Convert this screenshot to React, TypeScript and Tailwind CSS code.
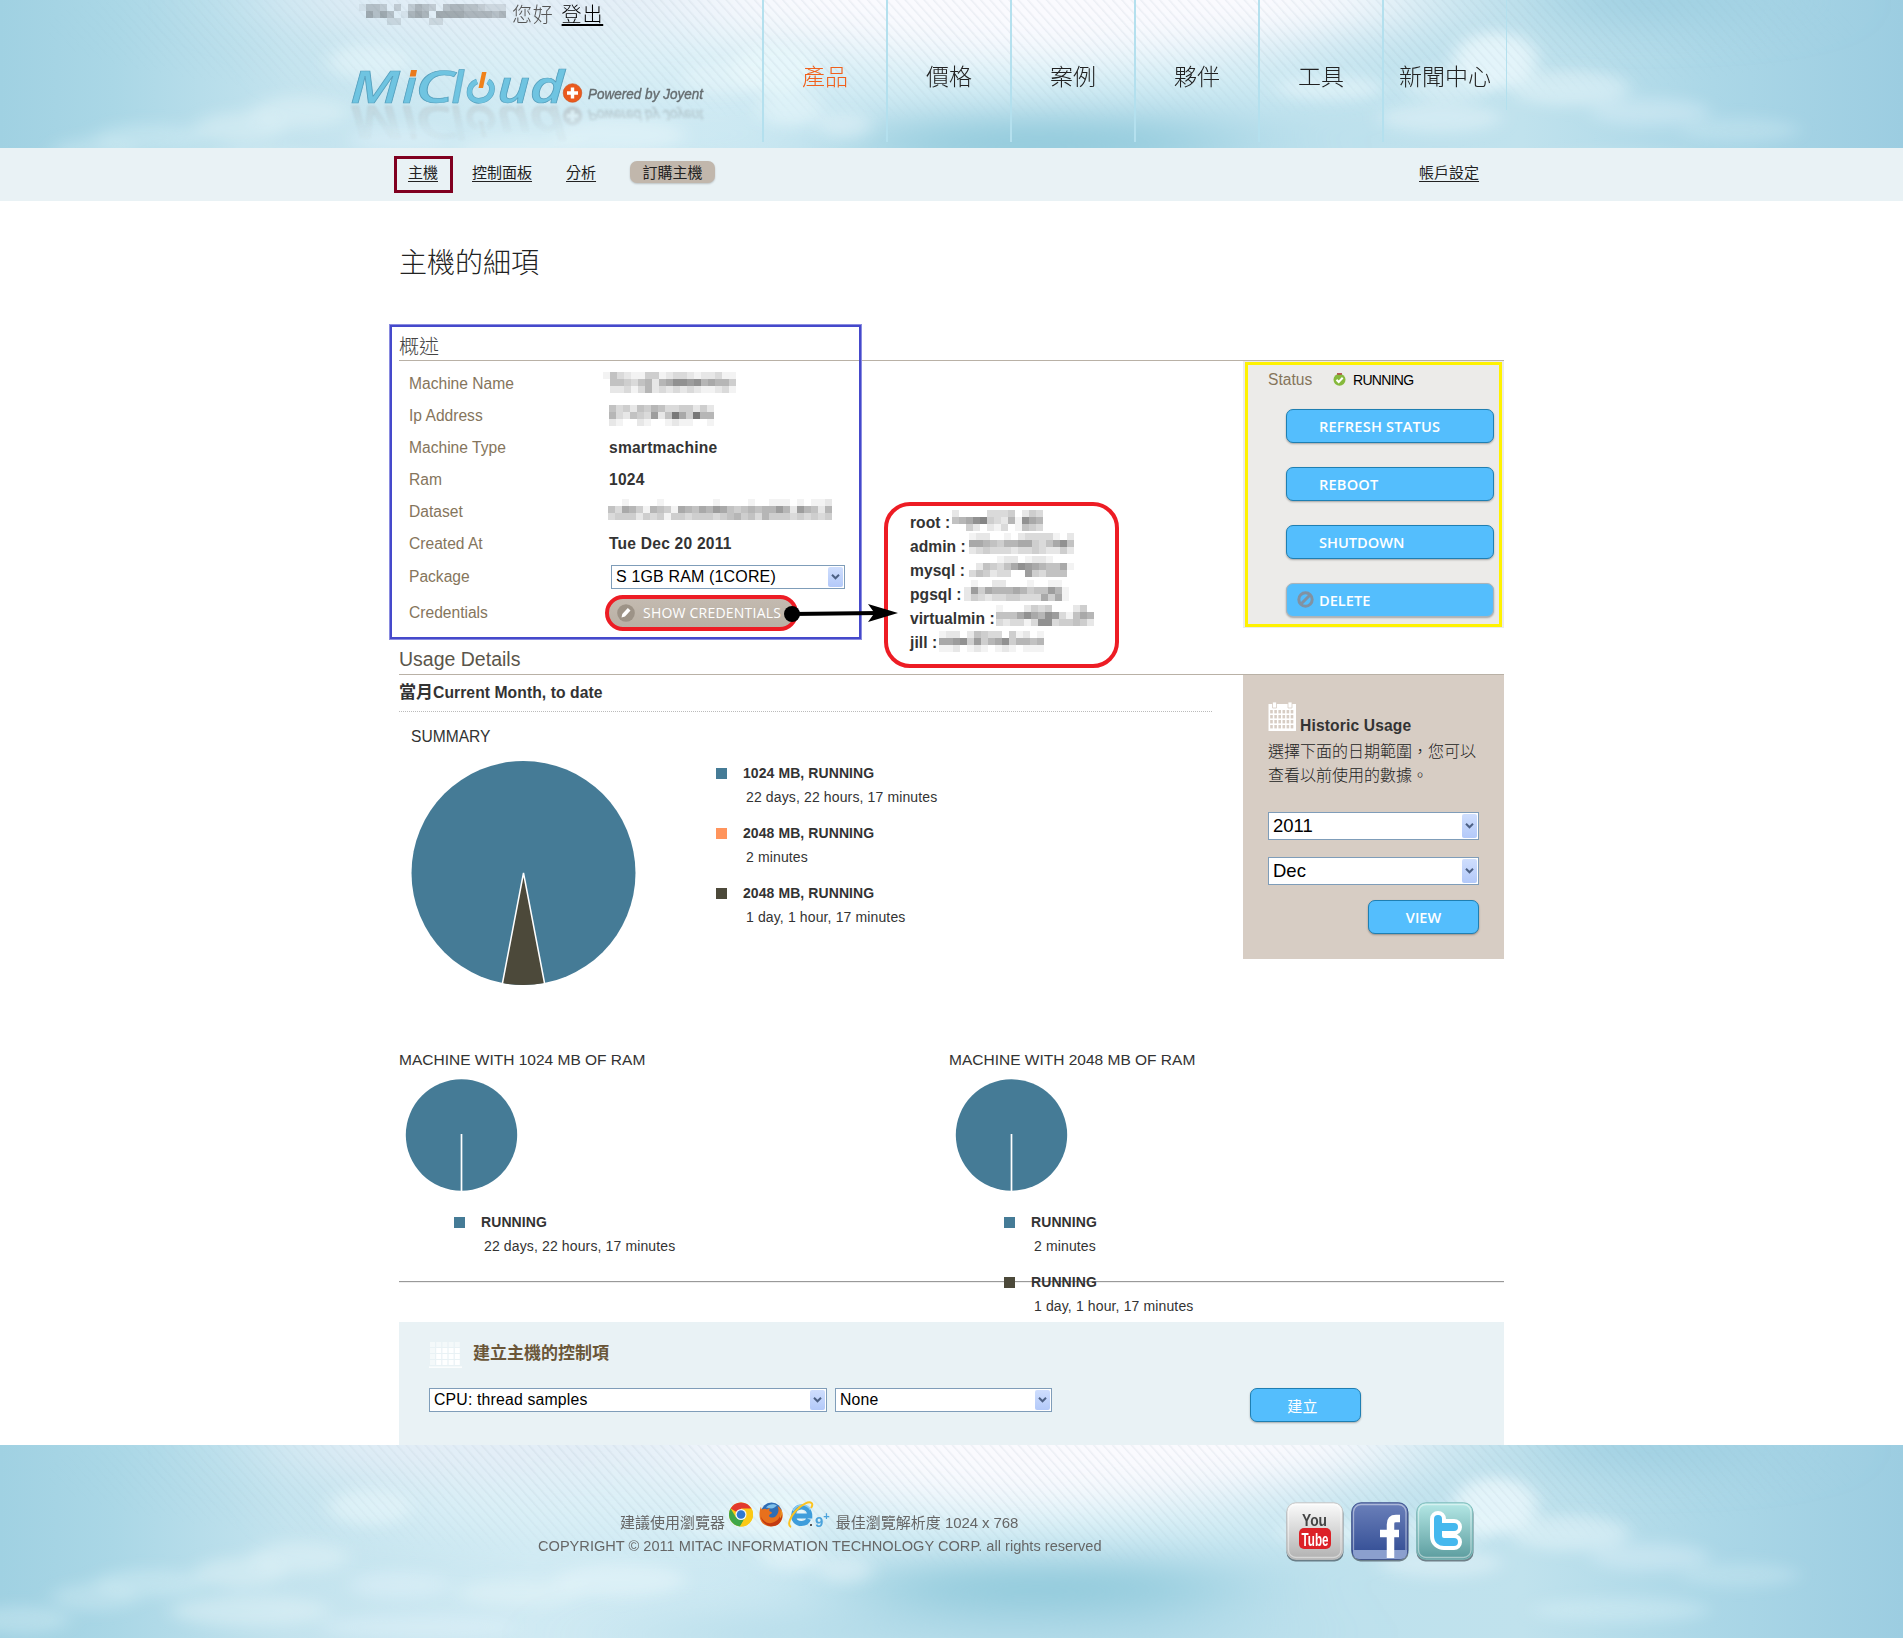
import React from "react";

const SANS = "font-['Liberation_Sans','Noto_Sans_CJK_TC',sans-serif]";

/* Pixelated block that hides private text: every digit is a 7px cell, "." is clear. */
function Mosaic({ rows, className = "" }: { rows: string[]; className?: string }) {
  return (
    <div className={`shrink-0 ${className}`}>
      {rows.map((r, i) => (
        <div key={i} className="flex h-[7px]">
          {r.split("").map((c, j) => (
            <span
              key={j}
              className="h-[7px] w-[7px] bg-black"
              style={{ opacity: c === "." ? 0 : parseInt(c, 16) * 0.048 }}
            />
          ))}
        </div>
      ))}
    </div>
  );
}

function Sky({ id }: { id: string }) {
  return (
    <svg className="absolute inset-0 h-full w-full" viewBox="0 0 1903 193" preserveAspectRatio="xMidYMin slice">
      <defs>
        <linearGradient id={`${id}b`} x1="0" x2="1" y1="0" y2="0">
          <stop offset="0" stopColor="#a0d1e2" />
          <stop offset=".06" stopColor="#aad7e6" />
          <stop offset=".15" stopColor="#c3e3ee" />
          <stop offset=".28" stopColor="#d0eaf3" />
          <stop offset=".42" stopColor="#cbe8f2" />
          <stop offset=".6" stopColor="#bbe0ed" />
          <stop offset=".8" stopColor="#c0e2ed" />
          <stop offset=".9" stopColor="#abd7e7" />
          <stop offset="1" stopColor="#9ccde1" />
        </linearGradient>
        <radialGradient id={`${id}m`} cx=".5" cy=".15" r=".48">
          <stop offset="0" stopColor="#fff" />
          <stop offset=".55" stopColor="#fff" stopOpacity=".8" />
          <stop offset="1" stopColor="#fff" stopOpacity="0" />
        </radialGradient>
        <mask id={`${id}k`}>
          <rect width="1903" height="193" fill={`url(#${id}m)`} />
        </mask>
        <pattern id={`${id}p`} width="7" height="7" patternUnits="userSpaceOnUse" patternTransform="rotate(-42)">
          <rect width="1.500" height="7" fill="#7d9aa8" opacity=".12" />
        </pattern>
        <filter id={`${id}f`} filterUnits="userSpaceOnUse" x="-200" y="-200" width="2303" height="600">
          <feGaussianBlur stdDeviation="60 20" />
        </filter>
        <filter id={`${id}g`} filterUnits="userSpaceOnUse" x="-100" y="-100" width="2103" height="400">
          <feGaussianBlur stdDeviation="9 7" />
        </filter>
      </defs>
      <rect width="1903" height="193" fill={`url(#${id}b)`} />
      <g filter={`url(#${id}f)`}>
        <ellipse cx="1030" cy="0" rx="400" ry="58" fill="#fafafe" />
        <ellipse cx="500" cy="0" rx="220" ry="36" fill="#e4eef7" />
        <ellipse cx="1050" cy="76" rx="330" ry="18" fill="#dcf2f8" />
        <ellipse cx="1040" cy="142" rx="200" ry="24" fill="#8cc7d9" />
        <ellipse cx="640" cy="60" rx="280" ry="28" fill="#dbf0f7" />
        <ellipse cx="1650" cy="0" rx="110" ry="22" fill="#9bcde0" />
        <ellipse cx="950" cy="190" rx="330" ry="12" fill="#a4d3e3" />
      </g>
      <g filter={`url(#${id}g)`} fill="#e9f7fb">
        <ellipse cx="775" cy="68" rx="44" ry="24" opacity=".8" />
        <ellipse cx="725" cy="78" rx="44" ry="16" opacity=".5" />
        <ellipse cx="790" cy="108" rx="32" ry="18" opacity=".55" />
        <ellipse cx="845" cy="125" rx="28" ry="14" opacity=".45" />
        <ellipse cx="370" cy="62" rx="42" ry="18" opacity=".55" />
        <ellipse cx="620" cy="135" rx="66" ry="17" opacity=".5" />
        <ellipse cx="520" cy="148" rx="64" ry="14" opacity=".4" />
        <ellipse cx="400" cy="140" rx="50" ry="14" opacity=".35" />
        <ellipse cx="300" cy="112" rx="50" ry="16" opacity=".4" />
        <ellipse cx="240" cy="128" rx="46" ry="16" opacity=".4" />
        <ellipse cx="150" cy="138" rx="56" ry="14" opacity=".3" />
        <ellipse cx="95" cy="152" rx="44" ry="14" opacity=".28" />
        <ellipse cx="20" cy="175" rx="50" ry="14" opacity=".3" />
        <ellipse cx="250" cy="166" rx="80" ry="16" opacity=".4" />
        <ellipse cx="420" cy="182" rx="100" ry="12" opacity=".35" />
        <ellipse cx="1495" cy="60" rx="42" ry="28" opacity=".85" />
        <ellipse cx="1450" cy="84" rx="50" ry="16" opacity=".5" />
        <ellipse cx="1330" cy="88" rx="54" ry="12" opacity=".6" />
        <ellipse cx="1440" cy="118" rx="62" ry="15" opacity=".45" />
        <ellipse cx="1570" cy="88" rx="60" ry="18" opacity=".5" />
        <ellipse cx="1650" cy="112" rx="60" ry="14" opacity=".35" />
        <ellipse cx="1740" cy="130" rx="60" ry="12" opacity=".25" />
        <ellipse cx="1620" cy="165" rx="90" ry="12" opacity=".3" />
      </g>
      <rect width="1903" height="193" fill={`url(#${id}p)`} mask={`url(#${id}k)`} />
    </svg>
  );
}

function Logo() {
  return (
    <svg className="overflow-visible" width="360" height="66" viewBox="350 64 360 66">
      <defs>
        <linearGradient id="fade" gradientUnits="userSpaceOnUse" x1="0" x2="0" y1="104" y2="80">
          <stop offset="0" stopColor="#fff" stopOpacity=".45" />
          <stop offset="1" stopColor="#fff" stopOpacity=".1" />
        </linearGradient>
        <mask id="fadeMask" maskUnits="userSpaceOnUse" x="340" y="60" width="380" height="50">
          <rect x="340" y="60" width="380" height="50" fill="url(#fade)" />
        </mask>
        <filter id="gray" x="-5%" y="-10%" width="110%" height="130%">
          <feColorMatrix type="saturate" values="0.1" />
          <feGaussianBlur stdDeviation=".9" />
        </filter>
        <g id="wordmark">
          <g
            className="font-['Open_Sans','Noto_Sans',sans-serif] font-semibold italic"
            fontSize="46"
            fill="#6fc4e1"
            stroke="#559fbd"
            strokeWidth=".7"
          >
            <text x="350" y="103" textLength="50" lengthAdjust="spacingAndGlyphs">M</text>
            <text x="402" y="103" textLength="15" lengthAdjust="spacingAndGlyphs">ı</text>
            <text x="415" y="103" textLength="39" lengthAdjust="spacingAndGlyphs">C</text>
            <path d="M452.500 103L459 69.500h5.500L458 103z" />
            <text x="497" y="103" textLength="33" lengthAdjust="spacingAndGlyphs">u</text>
            <text x="529.500" y="103" textLength="35" lengthAdjust="spacingAndGlyphs">d</text>
          </g>
          <path d="M477 81.300c-5 2-7.500 6-7.500 11 0 5 4 8.500 9 8.500 8 0 13.500-5.500 13.500-12 0-3.500-1.500-6-4-7.500" fill="none" stroke="#559fbd" strokeWidth="5.700" />
          <path d="M477 81.300c-5 2-7.500 6-7.500 11 0 5 4 8.500 9 8.500 8 0 13.500-5.500 13.500-12 0-3.500-1.500-6-4-7.500" fill="none" stroke="#6fc4e1" strokeWidth="4.600" />
          <path d="M482 72h4.500l-3.500 16h-4.500z" fill="#f0811a" />
          <path d="M411 70h6l-1.300 6.500h-6z" fill="#ea7a1c" />
          <circle cx="572.500" cy="93" r="9.300" fill="#ea5a1e" stroke="#c94f1d" strokeWidth=".6" />
          <path d="M572.500 87.500v11M567 93h11" stroke="#fff" strokeWidth="3.400" />
          <text
            x="588"
            y="99"
            fontSize="14.500"
            textLength="115"
            lengthAdjust="spacingAndGlyphs"
            fill="#666d70"
            stroke="#666d70"
            strokeWidth=".4"
            className="font-['Liberation_Sans',sans-serif] italic"
          >
            Powered by Joyent
          </text>
        </g>
      </defs>
      <use href="#wordmark" />
      <g transform="translate(0 209) scale(1 -1)" opacity=".75">
        <g mask="url(#fadeMask)">
          <use href="#wordmark" filter="url(#gray)" />
        </g>
      </g>
    </svg>
  );
}

function Select({ value, className = "" }: { value: string; className?: string }) {
  return (
    <div className={`flex items-stretch justify-between border border-[#7f9db9] bg-white p-px pl-[4px] text-black ${className}`}>
      <span className="self-center whitespace-nowrap">{value}</span>
      <span className="flex w-[15px] items-center justify-center rounded-[2px] bg-linear-to-b from-[#cfdefd] to-[#b3c9f9]">
        <svg width="9" height="6" viewBox="0 0 9 6">
          <path d="M1 .8l3.500 3.500L8 .8" fill="none" stroke="#4d6185" strokeWidth="2" />
        </svg>
      </span>
    </div>
  );
}

function Button({ children, className = "", border = "border-[#1f7fb2]" }: { children: React.ReactNode; className?: string; border?: string }) {
  return (
    <button
      className={`flex h-[34px] items-center rounded-[7px] border ${border} bg-[#54befd] pt-[2px] font-['Open_Sans','Noto_Sans_CJK_TC',sans-serif] text-white shadow-[0_1px_2px_rgba(0,0,0,0.3)] ${className}`}
    >
      {children}
    </button>
  );
}

function Calendar({ faint = false }: { faint?: boolean }) {
  const cells = [];
  for (let r = 0; r < 4; r++)
    for (let c = 0; c < 6; c++)
      cells.push(<rect key={`${r}-${c}`} x={2.2 + c * 4.1} y={8 + r * 5} width="2.600" height="3.400" />);
  if (faint) {
    const blocks = [];
    for (let r = 0; r < 4; r++)
      for (let c = 0; c < 5; c++)
        blocks.push(<rect key={`${r}-${c}`} x={1 + c * 6.2} y={r * 6} width="5" height="5" opacity={c < 1 || r < 1 ? 0.5 : 0.95} />);
    return (
      <svg width="33" height="26" viewBox="0 0 33 26" fill="#fff">
        {blocks}
        <rect y="24.500" width="33" height="1.300" />
      </svg>
    );
  }
  return (
    <svg width="29" height="29" viewBox="0 0 29 29">
      <path d="M.5 2H28v27H.5z" fill="#fff" />
      <path d="M4.500 0h4v6h-4zM20 0h4v6h-4z" fill="#fff" stroke="#d7cdc4" strokeWidth=".8" />
      <g fill="#d7cdc4">{cells}</g>
    </svg>
  );
}

const swatches = { blue: "bg-[#457b96]", orange: "bg-[#ff945c]", dark: "bg-[#4c493a]" };
type Entry = { color: keyof typeof swatches; label: string; time: string };

function Legend({ items }: { items: Entry[] }) {
  return (
    <ul className="relative z-10 flex flex-col gap-3 text-[14px] leading-6 whitespace-nowrap text-[#333]">
      {items.map((it, i) => (
        <li key={i}>
          <div className="flex h-6 items-center gap-4 font-bold tracking-[0.080px]">
            <span className={`h-[11px] w-[11px] ${swatches[it.color]}`} />
            <span>{it.label}</span>
          </div>
          <div className="ml-[30px] tracking-[0.130px]">{it.time}</div>
        </li>
      ))}
    </ul>
  );
}

function SmallPie() {
  return (
    <svg className="mt-[9px] ml-[6px]" width="113" height="112" viewBox="0 0 113 112">
      <circle cx="56.500" cy="56" r="55.700" fill="#457b96" />
      <path d="M56.500 55v57" stroke="#fff" strokeWidth="1.700" />
    </svg>
  );
}

function ChromeIcon() {
  return (
    <svg width="24" height="25" viewBox="0 0 24 24">
      <circle cx="12" cy="12" r="12" fill="#fbc916" />
      <path d="M12 12L1.600 6A12 12 0 0 1 22.400 6z" fill="#e2382c" />
      <path d="M1.600 6A12 12 0 0 0 11 24l5.500-9.500L12 12 6.800 14.500z" fill="#3fa648" />
      <path d="M22.400 6H12v6l4.500 2.500L11 24A12 12 0 0 0 22.400 6z" fill="#fbc916" />
      <circle cx="12" cy="12" r="5.500" fill="#f4f8fb" />
      <circle cx="12" cy="12" r="4.300" fill="#2f78cf" />
    </svg>
  );
}

function FirefoxIcon() {
  return (
    <svg width="24" height="25" viewBox="0 0 24 24">
      <circle cx="12.500" cy="10.500" r="10.500" fill="#2f6db5" />
      <path d="M7 5c3-4 8-4 11-2-2 1-3 3-6 3z" fill="#7fc0ea" />
      <path d="M2 4c0 2 1 3 1 3 2-1 4-1 5 0 1-1 2-1.500 3-1.500-1 2-1 2.500 0 3.500 1 .5 2 .5 2 1.500-1 1-3 1.500-3 3 1 2 5 2 7 0 3-3 3-7 1.500-10C23 6 24.500 11 23.500 15c-1.500 6-6 9-11.500 9C5 24 .5 19 .5 12.500.5 9 1 6 2 4z" fill="#e8701c" />
      <path d="M2 14c2 5 7 8 12 6 5-1.500 8-6 8-11 2 5 1 9-2 12-3 3-9 4-13 1-3-2-5-5-5-8z" fill="#c23a12" />
      <path d="M22 7c1 3 1 7-1 9 .5-3 1-6 1-9z" fill="#fcc32c" />
    </svg>
  );
}

function IeIcon() {
  return (
    <svg width="26" height="27" viewBox="0 0 26 27">
      <path d="M20.500 18c-1 3-3.500 4.500-7 4.500-5 0-8-3.500-8-8s3-8.500 8-8.500 8.300 3.500 8.300 9H8" fill="none" stroke="#3f9ddb" strokeWidth="5" />
      <path d="M5 10c2-4 5-6 9-6 4 0 7 2 8.500 5" fill="none" stroke="#8accf2" strokeWidth="1.500" />
      <path d="M3 26C-1 24 2 16 8 9.500 14 3 21 0 23.500 2c1.200 1 .8 3-.5 5" fill="none" stroke="#fcc321" strokeWidth="2" />
      <path d="M22 23h2v2h-2z" fill="#555" />
    </svg>
  );
}

function Tile({ id, from, to, edge, children }: { id: string; from: string; to: string; edge: string; children: React.ReactNode }) {
  return (
    <svg width="58" height="61" viewBox="0 0 58 61">
      <defs>
        <linearGradient id={id} x1="0" x2="0" y1="0" y2="1">
          <stop offset="0" stopColor={from} />
          <stop offset="1" stopColor={to} />
        </linearGradient>
      </defs>
      <rect x=".5" y="3" width="57" height="56.500" rx="9" fill="#4d5c66" opacity=".75" />
      <rect x=".8" y=".8" width="56" height="56.500" rx="9" fill={`url(#${id})`} stroke={edge} strokeWidth="1" />
      <rect x="2.500" y="2.500" width="52.500" height="53" rx="7.500" fill="none" stroke="#fff" strokeOpacity=".45" strokeWidth="1.300" />
      {children}
    </svg>
  );
}

const navItems = ["產品", "價格", "案例", "夥伴", "工具", "新聞中心"];

function Row({ label, children, className = "h-8" }: { label: string; children: React.ReactNode; className?: string }) {
  return (
    <div className={`flex items-center pl-[10px] ${className}`}>
      <dt className="w-[200px] text-[15.600px] text-[#85755c]">{label}</dt>
      <dd className="text-[15.600px] font-bold tracking-[0.220px] text-[#333]">{children}</dd>
    </div>
  );
}

const credentials: { name: string; gap: string; rows: string[] }[] = [
  { name: "root :", gap: "left-[62px] top-[-1px]", rows: ["2....3334.243", "5679a43261976", "..42.213.1543"] },
  { name: "admin :", gap: "left-[79px] top-[-2px]", rows: ["122..1.233331.2", "776546677435795", "234333233432242"] },
  { name: "mysql :", gap: "left-[79px] top-[-3px]", rows: ["....122.1221...", ".25435798765571", "354233..843555."] },
  { name: "pgsql :", gap: "left-[74px] top-[-3px]", rows: [".1..22...1..11.", "284766676455861", "243233443337471"] },
  { name: "virtualmin :", gap: "left-[106px] top-[-2px]", rows: ["1...2434...24.", "55579769831576", "32331399344542"] },
  { name: "jill :", gap: "left-[49px] top-0", rows: ["122.25433.412.1", "778948467946656", "112.121.121.111"] },
];

export default function App() {
  return (
    <div className={`relative h-[1638px] w-[1903px] overflow-hidden bg-white text-[#333] ${SANS}`}>
      <header className="relative h-[148px] overflow-hidden">
        <Sky id="top" />
        <div className="relative flex pl-[352px]">
          <div className="w-[410px]">
            <div className="flex h-[29px] items-center pl-[7px] text-[20px] leading-7 tracking-[0.800px]">
              <Mosaic
                className="w-[147px]"
                rows={["1443.3.3543.455443222", ".6464.1565.6666555545", "....22....22........."]}
              />
              <span className="ml-[6px] font-light text-[#555]">您好</span>
              <a className="ml-[8px] font-light text-black underline underline-offset-2">登出</a>
            </div>
            <div className="mt-[35px] -ml-[2px]">
              <Logo />
            </div>
          </div>
          <nav className="flex">
            {navItems.map((t, i) => (
              <a
                key={t}
                className={`flex h-[142px] w-[124px] items-center justify-center border-l-2 border-[#b4e0ee] pt-[13px] text-[23px] font-light ${i === 0 ? "text-[#f0601c]" : "text-[#222]"}`}
              >
                {t}
              </a>
            ))}
            <span className="h-[110px] w-px bg-[#b4e0ee]" />
          </nav>
        </div>
      </header>

      <div className="flex h-[53px] items-center bg-[#e9f2f5] pl-[394px] text-[15px] text-[#222]">
        <a className="flex h-[37px] w-[59px] items-center justify-center border-3 border-[#800020] pr-px pb-[2px]">
          <span className="underline underline-offset-3">主機</span>
        </a>
        <a className="-mt-[2px] ml-[19px] underline underline-offset-3">控制面板</a>
        <a className="-mt-[2px] ml-[34px] underline underline-offset-3">分析</a>
        <a className="-mt-[5px] ml-[34px] flex h-[22px] w-[85px] items-center justify-center rounded-[7px] bg-[#c1b7ac] pt-[2px] shadow-[0_1px_2px_rgba(0,0,0,0.2)]">訂購主機</a>
        <a className="-mt-[2px] ml-[704px] underline underline-offset-3">帳戶設定</a>
      </div>

      <main className="mx-auto w-[1105px]">
        <h1 className="flex h-[122px] items-center pt-[3px] text-[28px] font-light text-[#222]">主機的細項</h1>
        <h2 className="mt-[11px] flex h-[27px] items-center border-b border-[#b9b1a6] text-[20px] font-light text-[#444]">概述</h2>

        <section className="relative flex h-[283px] items-start justify-between">
          <dl className="pt-[7px]">
            <Row label="Machine Name">
              <Mosaic className="-mt-[3px] -ml-[6px]" rows={["1532114412332122311", ".554356267998967664", ".223136232323211231"]} />
            </Row>
            <Row label="Ip Address">
              <Mosaic className="-mt-px" rows={["534254653344242", "632543825b74b66", "21..21..1211..1"]} />
            </Row>
            <Row label="Machine Type">smartmachine</Row>
            <Row label="Ram">1024</Row>
            <Row label="Dataset">
              <Mosaic
                className="-mt-[5px] -ml-px"
                rows={["..1....1.......1....1..111.1.112", "53764165417657687545656686286526", "34442434144344434564536444343434"]}
              />
            </Row>
            <Row label="Created At">Tue Dec 20 2011</Row>
            <Row label="Package" className="h-[34px]">
              <Select value="S 1GB RAM (1CORE)" className="ml-[2px] h-[24px] w-[234px] text-[16px] font-normal tracking-[0.150px]" />
            </Row>
            <Row label="Credentials" className="h-[37px]">
              <button className="-ml-[4px] flex h-[36px] w-[193px] items-center rounded-full border-4 border-[#ed1c24] bg-linear-to-b from-[#c3bab0] to-[#b9b0a4] pl-[8px]">
                <svg width="18" height="18" viewBox="0 0 18 18">
                  <circle cx="9" cy="9" r="8.800" fill="#9d9387" />
                  <path d="M4.500 13.500l.8-3.500 5.500-6 2.700 2.500-5.500 6z" fill="#fff" />
                </svg>
                <span className="ml-[8px] font-['Open_Sans',sans-serif] text-[14px] font-normal tracking-[0.220px] whitespace-nowrap text-white">SHOW CREDENTIALS</span>
              </button>
            </Row>
          </dl>

          <aside className="relative h-[267px] w-[261px] bg-[#ecebe9] pt-[9px]">
            <div className="absolute top-px left-[2px] h-[265px] w-[257px] border-3 border-[#fff200]" />
            <div className="flex h-5 items-center pl-[25px]">
              <span className="w-[65px] text-[15.600px] text-[#85755c]">Status</span>
              <svg className="-mt-px" width="13" height="13" viewBox="0 0 13 13">
                <circle cx="6.500" cy="6.700" r="6" fill="#86b93c" />
                <path d="M4 .9h5" stroke="#b0413e" strokeWidth="1.500" />
                <path d="M3.500 6.800l2.200 2.200 4-4.200" fill="none" stroke="#fff" strokeWidth="2" />
              </svg>
              <span className="ml-[7px] text-[14px] tracking-[-0.700px] text-black">RUNNING</span>
            </div>
            <div className="mt-[19px] ml-[43px] flex w-[208px] flex-col gap-6 text-[14.600px] font-semibold">
              <Button className="pl-[32px] tracking-[0.200px]">REFRESH STATUS</Button>
              <Button className="pl-[32px] tracking-[0.200px]">REBOOT</Button>
              <Button className="pl-[32px]">SHUTDOWN</Button>
              <Button className="pl-[10px]" border="border-[#a9b4bb]">
                <svg className="-mt-[4px]" width="17" height="17" viewBox="0 0 17 17" fill="none" stroke="#8192a2" strokeWidth="3">
                  <circle cx="8.500" cy="8.500" r="6.700" />
                  <path d="M4 13l9-9" />
                </svg>
                <span className="ml-[5px]">DELETE</span>
              </Button>
            </div>
          </aside>

          {/* annotation frames and the arrow lie over the form */}
          <div className="absolute top-[-37px] left-[-10px] h-[316px] w-[473px] border-3 border-[#4549cb] outline-1 -outline-offset-1 outline-[#8a8ce0]" />
          <div className="absolute top-[141px] left-[485px] z-10 h-[166px] w-[235px] rounded-[26px] border-4 border-[#ed1c24] bg-white pt-[5px] pl-[22px]">
            {credentials.map((c) => (
              <div key={c.name} className="relative h-6 text-[15.600px] leading-6 font-bold tracking-[0.050px]">
                {c.name}
                <Mosaic className={`absolute -ml-[20px] ${c.gap}`} rows={c.rows} />
              </div>
            ))}
          </div>
          <svg className="absolute top-[239px] left-[385px] z-20" width="116" height="28" viewBox="0 0 116 28">
            <path d="M8 14L94 13" stroke="#000" strokeWidth="4" />
            <circle cx="8" cy="14" r="8" />
            <path d="M114 13L84 4l6.500 9L84 22z" />
          </svg>
        </section>

        <h2 className="flex h-[31px] items-center border-b border-[#b9b1a6] pt-px text-[19.500px] text-[#5b564b]">Usage Details</h2>

        <section className="flex items-start justify-between">
          <div className="w-[813px]">
            <h3 className="flex h-[37px] items-center border-b border-dotted border-[#bbb] text-[15.700px] font-bold tracking-[0.060px]">
              <span className="w-[34px] text-[17px] tracking-normal whitespace-nowrap">當月</span>Current Month, to date
            </h3>
            <div className="mt-[15px] ml-3 h-5 text-[15.600px] leading-5">SUMMARY</div>
            <div className="mt-[13px] ml-3 flex">
              <svg width="226" height="226" viewBox="0 0 226 226">
                <circle cx="112.500" cy="113" r="112" fill="#457b96" />
                <path d="M112.500 113L91.500 223A112 112 0 0 0 133.500 223z" fill="#4c493a" />
                <path d="M91.300 224L112.500 113L133.700 224" fill="none" stroke="#fff" strokeWidth="1.500" />
              </svg>
              <div className="mt-px ml-[79px]">
                <Legend
                  items={[
                    { color: "blue", label: "1024 MB, RUNNING", time: "22 days, 22 hours, 17 minutes" },
                    { color: "orange", label: "2048 MB, RUNNING", time: "2 minutes" },
                    { color: "dark", label: "2048 MB, RUNNING", time: "1 day, 1 hour, 17 minutes" },
                  ]}
                />
              </div>
            </div>
            <div className="mt-[64px] flex h-[231px] text-[15.500px]">
              <div className="w-[550px]">
                <div className="h-5 leading-5">MACHINE WITH 1024 MB OF RAM</div>
                <SmallPie />
                <div className="mt-[19px] ml-[55px]">
                  <Legend items={[{ color: "blue", label: "RUNNING", time: "22 days, 22 hours, 17 minutes" }]} />
                </div>
              </div>
              <div>
                <div className="h-5 leading-5 whitespace-nowrap">MACHINE WITH 2048 MB OF RAM</div>
                <SmallPie />
                <div className="mt-[19px] ml-[55px]">
                  <Legend
                    items={[
                      { color: "blue", label: "RUNNING", time: "2 minutes" },
                      { color: "dark", label: "RUNNING", time: "1 day, 1 hour, 17 minutes" },
                    ]}
                  />
                </div>
              </div>
            </div>
          </div>

          <aside className="h-[284px] w-[261px] bg-[#d7cdc4] pt-[27px] pl-[25px]">
            <div className="flex h-[29px]">
              <Calendar />
              <span className="mt-[14px] ml-[3px] text-[15.600px] leading-5 font-bold tracking-[0.150px]">Historic Usage</span>
            </div>
            <p className="mt-[9px] w-[210px] text-[16px] leading-6 font-light text-[#222]">選擇下面的日期範圍，您可以查看以前使用的數據。</p>
            <Select value="2011" className="mt-[24px] h-[28px] w-[211px] text-[18.500px]" />
            <Select value="Dec" className="mt-[17px] h-[28px] w-[211px] text-[18.500px]" />
            <Button className="mt-[15px] ml-[100px] w-[111px] justify-center text-[14.500px] font-semibold">VIEW</Button>
          </aside>
        </section>

        <hr className="h-[2px] border-t border-b border-t-[#999] border-b-[#eee]" />

        <section className="mt-[39px] h-[123px] bg-[#e9f2f5] pt-[20px] pl-[30px]">
          <div className="flex h-[26px]">
            <Calendar faint />
            <h3 className="ml-[11px] text-[17px] leading-6 font-bold text-[#6a5638]">建立主機的控制項</h3>
          </div>
          <div className="mt-[20px] flex items-start text-[15.800px] tracking-[0.180px]">
            <Select value="CPU: thread samples" className="h-[24px] w-[398px]" />
            <Select value="None" className="ml-[8px] h-[24px] w-[217px]" />
            <Button className="ml-[198px] w-[111px] justify-center pt-[3px] pr-[6px] text-[15px] font-normal">建立</Button>
          </div>
        </section>
      </main>

      <footer className="relative h-[193px] overflow-hidden">
        <Sky id="bottom" />
        <div className="relative flex pt-[55px] text-[#666]">
          <div className="ml-[538px] w-[563px]">
            <div className="flex h-[33px] items-start justify-start pl-[82px] text-[15px]">
              <span className="mt-[11px] w-[109px] leading-6 font-normal">建議使用瀏覽器</span>
              <span className="mt-[2px]"><ChromeIcon /></span>
              <span className="mt-[2px] ml-[6px]"><FirefoxIcon /></span>
              <span className="mt-px ml-[5px]"><IeIcon /></span>
              <span className="mt-[10px] ml-px text-[15px] leading-6 font-bold text-[#4ba3dc]">9<sup className="relative -top-[7px] text-[11px]">+</sup></span>
              <span className="mt-[11px] ml-[6px] leading-6 whitespace-nowrap">最佳瀏覽解析度 <span className="tracking-[-0.100px]">1024 x 768</span></span>
            </div>
            <div className="mt-px text-[14.600px] leading-6 whitespace-nowrap">COPYRIGHT © 2011 MITAC INFORMATION TECHNOLOGY CORP. all rights reserved</div>
          </div>
          <div className="mt-[2px] ml-[185px] flex gap-[7px]">
            <Tile id="yt" from="#fbfbfb" to="#b1b1b1" edge="#c4c4c4">
              <text x="28.500" y="24" textAnchor="middle" fontSize="17" textLength="25" lengthAdjust="spacingAndGlyphs" fill="#444" className="font-['Liberation_Sans',sans-serif] font-bold">You</text>
              <rect x="13" y="26" width="32" height="21" rx="5" fill="#dc2127" />
              <text x="29" y="43.500" textAnchor="middle" fontSize="18" textLength="27" lengthAdjust="spacingAndGlyphs" fill="#fff" className="font-['Liberation_Sans',sans-serif] font-bold">Tube</text>
            </Tile>
            <Tile id="fb" from="#6b80ba" to="#2f4a92" edge="#3c4f8c">
              <path d="M2 48h54v3a6 6 0 0 1-6 6H8a6 6 0 0 1-6-6z" fill="#8b9fce" />
              <path d="M49 16.500h-4c-4 0-5.500 2-5.500 6V56M29 31.500h19" fill="none" stroke="#fff" strokeWidth="7.500" />
            </Tile>
            <Tile id="tw" from="#b5e8e6" to="#5b9c9e" edge="#7dbab9">
              <g fill="none" strokeLinecap="round" strokeLinejoin="round">
                <path d="M22 17v17c0 4 2.500 6 6 6h10M22 25h16" stroke="#fff" strokeWidth="16" />
                <path d="M22 17v17c0 4 2.500 6 6 6h10M22 25h16" stroke="#45b8ee" strokeWidth="8" />
              </g>
            </Tile>
          </div>
        </div>
      </footer>
    </div>
  );
}
